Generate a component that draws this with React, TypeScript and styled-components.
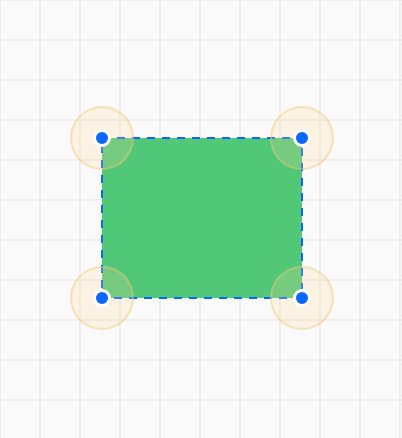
import React from "react";
import styled, { createGlobalStyle } from "styled-components";

const GlobalStyle = createGlobalStyle`
    html, body {
        margin: 0;
        padding: 0;
        background: #fafafa;
        font-family: "Liberation Sans", Arial, sans-serif;
    }
`;

const Canvas = styled.div`
    position: relative;
    width: 402px;
    height: 438px;
    overflow: hidden;
    background-color: #fafafa;
    background-image:
        linear-gradient(to right, #eeeeee 2px, transparent 2px),
        linear-gradient(to bottom, #eeeeee 2px, transparent 2px);
    background-size: 40px 40px;
    background-position: -1px -1px;
`;

const Shape = styled.div<{ $x: number; $y: number; $w: number; $h: number }>`
    position: absolute;
    left: ${(p) => p.$x}px;
    top: ${(p) => p.$y}px;
    width: ${(p) => p.$w}px;
    height: ${(p) => p.$h}px;
    background: #50c878;
`;

const Outline = styled.svg`
    position: absolute;
    left: -1px;
    top: -1px;
    overflow: visible;
`;

const Handle = styled.div<{ $left: boolean; $top: boolean }>`
    position: absolute;
    left: ${(p) => (p.$left ? "0" : "100%")};
    top: ${(p) => (p.$top ? "0" : "100%")};
    width: 0;
    height: 0;
`;

const Halo = styled.div`
    position: absolute;
    left: -32px;
    top: -32px;
    width: 64px;
    height: 64px;
    box-sizing: border-box;
    border-radius: 50%;
    background: rgba(253, 214, 150, 0.22);
    border: 2px solid rgba(242, 196, 110, 0.4);
`;

const Dot = styled.div`
    position: absolute;
    left: -9px;
    top: -9px;
    width: 12px;
    height: 12px;
    border-radius: 50%;
    background: #0a66ff;
    border: 3px solid #ffffff;
`;

const corners = [
    { left: true, top: true },
    { left: false, top: true },
    { left: true, top: false },
    { left: false, top: false },
];

const App: React.FC = () => {
    const w = 200;
    const h = 160;
    return (
        <>
            <GlobalStyle />
            <Canvas>
                <Shape $x={102} $y={138} $w={w} $h={h}>
                    <Outline width={w + 2} height={h + 2}>
                        <rect
                            x={1}
                            y={1}
                            width={w}
                            height={h}
                            fill="none"
                            stroke="#0a66ff"
                            strokeWidth={2}
                            strokeDasharray="8 7"
                        />
                    </Outline>
                    {corners.map((c, i) => (
                        <Handle key={i} $left={c.left} $top={c.top}>
                            <Halo />
                            <Dot />
                        </Handle>
                    ))}
                </Shape>
            </Canvas>
        </>
    );
};

export default App;
